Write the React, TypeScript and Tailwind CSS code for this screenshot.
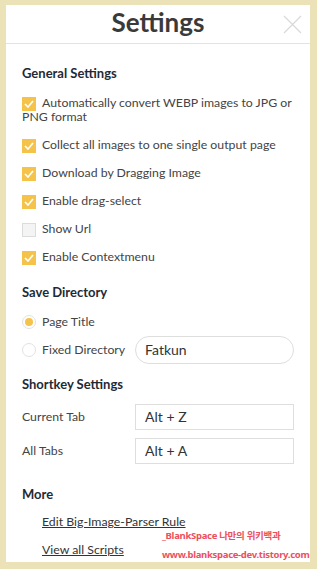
const checks = [
  { label: "Automatically convert WEBP images to JPG or PNG format", on: true },
  { label: "Collect all images to one single output page", on: true },
  { label: "Download by Dragging Image", on: true },
  { label: "Enable drag-select", on: true },
  { label: "Show Url", on: false },
  { label: "Enable Contextmenu", on: true },
];

function Check({ on }: { on: boolean }) {
  if (!on) {
    return <span className="relative top-[1px] inline-block h-[14px] w-[14px] border border-[#dcdcdc] bg-[#f4f4f4] align-top" />;
  }
  return (
    <span className="relative top-[1px] inline-flex h-[14px] w-[14px] items-center justify-center bg-[#f6c34a] align-top">
      <svg width="10" height="8" viewBox="0 0 10 8" fill="none">
        <path d="M1 4l3 3 5-6" stroke="white" strokeWidth="1.6" />
      </svg>
    </span>
  );
}

function Radio({ on }: { on: boolean }) {
  return (
    <span className="flex h-[14px] w-[14px] items-center justify-center rounded-full border border-[#e2e2e2] bg-white">
      {on && <span className="h-[8px] w-[8px] rounded-full bg-[#f6c34a]" />}
    </span>
  );
}

function Heading({ children }: { children: string }) {
  return <div className="text-[13px] font-bold leading-[16px] text-[#1f2a36]">{children}</div>;
}

export default function App() {
  return (
    <div className="h-[569px] w-[317px] bg-[#ece2b8] pb-[7px] pl-[6px] pr-[7px] pt-[5px] font-['Lato',sans-serif]">
      <div className="relative flex h-full flex-col bg-white">
        <div className="relative flex h-[39px] items-center justify-center border-b border-[#e3e3e3]">
          <span className="mb-[5px] text-[26px] font-bold leading-none text-[#3a3a3a]">Settings</span>
          <svg className="absolute right-[8px] top-[10px]" width="19" height="19" viewBox="0 0 19 19" fill="none">
            <path d="M1 1l17 17M18 1L1 18" stroke="#d9d9d9" strokeWidth="1.2" />
          </svg>
        </div>

        <div className="px-[16px] pt-[21px] text-[12.3px] leading-[14px] text-[#444]">
          <Heading>General Settings</Heading>
          <div className="mt-[15px] flex flex-col gap-[14px]">
            {checks.map((c) => (
              <div key={c.label} className="leading-[14px]">
                <Check on={c.on} />
                <span className="ml-[6px]">{c.label}</span>
              </div>
            ))}
          </div>

          <div className="mt-[20px]">
            <Heading>Save Directory</Heading>
          </div>
          <div className="mt-[15px] flex items-center gap-[6px]">
            <Radio on />
            <span>Page Title</span>
          </div>
          <div className="mt-[7px] flex items-center">
            <div className="flex w-[114px] items-center gap-[6px]">
              <Radio on={false} />
              <span>Fixed Directory</span>
            </div>
            <div className="flex h-[28px] w-[160px] items-center rounded-full border border-[#dedede] px-[9px] text-[14px] text-[#333]">
              Fatkun
            </div>
          </div>

          <div className="mt-[12px]">
            <Heading>Shortkey Settings</Heading>
          </div>
          <div className="mt-[12px] flex items-center">
            <span className="w-[114px]">Current Tab</span>
            <div className="flex h-[26px] w-[160px] items-center border border-[#dedede] px-[9px] text-[14px] text-[#333]">
              Alt + Z
            </div>
          </div>
          <div className="mt-[8px] flex items-center">
            <span className="w-[114px]">All Tabs</span>
            <div className="flex h-[26px] w-[160px] items-center border border-[#dedede] px-[9px] text-[14px] text-[#333]">
              Alt + A
            </div>
          </div>

          <div className="mt-[22px]">
            <Heading>More</Heading>
          </div>
          <div className="mt-[13px] flex flex-col items-start gap-[14px] pl-[20px] text-[#333]">
            <span className="underline">Edit Big-Image-Parser Rule</span>
            <span className="underline">View all Scripts</span>
          </div>
        </div>

        <div className="absolute bottom-[3px] left-[156px] flex flex-col gap-[9px] whitespace-nowrap font-['Noto_Sans','Noto_Sans_CJK_KR',sans-serif] text-[9.5px] font-bold leading-none tracking-[-0.3px] text-[#ec4f5e]">
          <span>_BlankSpace 나만의 위키백과</span>
          <span>www.blankspace-dev.tistory.com</span>
        </div>
      </div>
    </div>
  );
}
